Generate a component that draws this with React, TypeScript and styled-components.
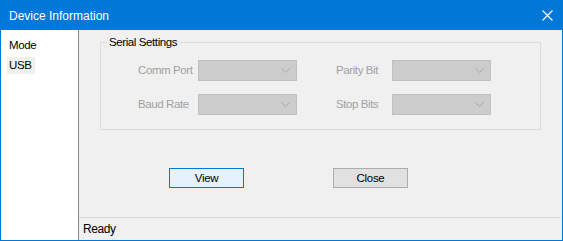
import React from "react";
import styled, { createGlobalStyle } from "styled-components";

const Global = createGlobalStyle`
  html, body { margin: 0; padding: 0; background: #f0f0f0; }
  body {
    font-family: "Liberation Sans", Arial, sans-serif;
    font-size: 11.5px;
    letter-spacing: -0.4px;
    color: #000;
  }
`;

const Window = styled.div`
  width: 563px;
  height: 241px;
  box-sizing: border-box;
  border: 1px solid #0078d7;
  background: #f0f0f0;
  display: flex;
  flex-direction: column;
`;

const TitleBar = styled.div`
  height: 29px;
  flex: none;
  background: #0078d7;
  color: #fff;
  display: flex;
  align-items: center;
  justify-content: space-between;
  padding: 0 9px 0 8px;
  font-size: 12px;
  letter-spacing: 0;
`;

const CloseIcon = styled.svg`
  width: 11px;
  height: 11px;
  display: block;
`;

const Body = styled.div`
  flex: 1;
  display: flex;
  min-height: 0;
`;

const Sidebar = styled.div`
  width: 77px;
  flex: none;
  background: #fff;
  border-right: 1px solid #828790;
  padding-top: 7px;
  display: flex;
  flex-direction: column;
  align-items: flex-start;
  gap: 3px;
`;

const Item = styled.div<{ $selected?: boolean }>`
  height: 17px;
  line-height: 17px;
  margin-left: 6px;
  padding: 0 4px 0 2px;
  background: ${(p) => (p.$selected ? "#f0f0f0" : "transparent")};
`;

const Main = styled.div`
  flex: 1;
  display: flex;
  flex-direction: column;
`;

const Content = styled.div`
  padding: 12px 0 0 21px;
`;

const GroupBox = styled.div`
  position: relative;
  width: 441px;
  box-sizing: border-box;
  border: 1px solid #dcdcdc;
  padding: 17px 0 14px 37px;
`;

const Legend = styled.span`
  position: absolute;
  top: -8px;
  left: 6px;
  padding: 0 2px;
  background: #f0f0f0;
  line-height: 14px;
`;

const FieldGrid = styled.div`
  display: grid;
  grid-template-columns: 60px 99px 39px 56px 99px;
  grid-auto-rows: 21px;
  row-gap: 13px;
  align-items: center;
`;

const Label = styled.span<{ $col: number }>`
  grid-column: ${(p) => p.$col};
  color: #a0a0a0;
  margin-top: -2px;
`;

const Combo = styled.div<{ $col: number }>`
  grid-column: ${(p) => p.$col};
  height: 21px;
  box-sizing: border-box;
  background: #cccccc;
  border: 1px solid #bfbfbf;
  display: flex;
  align-items: center;
  justify-content: flex-end;
  padding-right: 6px;
`;

const Chevron = styled.svg`
  width: 9px;
  height: 5px;
  display: block;
`;

const ButtonRow = styled.div`
  display: flex;
  gap: 89px;
  padding: 38px 0 0 69px;
`;

const Button = styled.button<{ $default?: boolean }>`
  width: 75px;
  height: 20px;
  box-sizing: border-box;
  margin: 0;
  padding: 0;
  font: inherit;
  letter-spacing: -0.3px;
  color: #000;
  border: 1px solid ${(p) => (p.$default ? "#0078d7" : "#adadad")};
  background: ${(p) => (p.$default ? "#e5f1fb" : "#e1e1e1")};
`;

const StatusBar = styled.div`
  margin-top: auto;
  margin-right: 1px;
  height: 22px;
  border-top: 1px solid #d7d7d7;
  display: flex;
  align-items: center;
  padding-left: 4px;
  font-size: 12px;
  letter-spacing: -0.4px;
`;

const ComboBox = ({ col }: { col: number }) => (
  <Combo $col={col}>
    <Chevron viewBox="0 0 9 5">
      <polyline points="0.5,0.5 4.5,4.5 8.5,0.5" fill="none" stroke="#a8a8a8" strokeWidth="1" />
    </Chevron>
  </Combo>
);

export default function App() {
  return (
    <>
      <Global />
      <Window>
        <TitleBar>
          <span>Device Information</span>
          <CloseIcon viewBox="0 0 11 11">
            <path d="M0.5 0.5 L10.5 10.5 M10.5 0.5 L0.5 10.5" stroke="#fff" strokeWidth="1.1" />
          </CloseIcon>
        </TitleBar>
        <Body>
          <Sidebar>
            <Item>Mode</Item>
            <Item $selected>USB</Item>
          </Sidebar>
          <Main>
            <Content>
              <GroupBox>
                <Legend>Serial Settings</Legend>
                <FieldGrid>
                  <Label $col={1}>Comm Port</Label>
                  <ComboBox col={2} />
                  <Label $col={4}>Parity Bit</Label>
                  <ComboBox col={5} />
                  <Label $col={1}>Baud Rate</Label>
                  <ComboBox col={2} />
                  <Label $col={4}>Stop Bits</Label>
                  <ComboBox col={5} />
                </FieldGrid>
              </GroupBox>
              <ButtonRow>
                <Button $default>View</Button>
                <Button>Close</Button>
              </ButtonRow>
            </Content>
            <StatusBar>Ready</StatusBar>
          </Main>
        </Body>
      </Window>
    </>
  );
}
